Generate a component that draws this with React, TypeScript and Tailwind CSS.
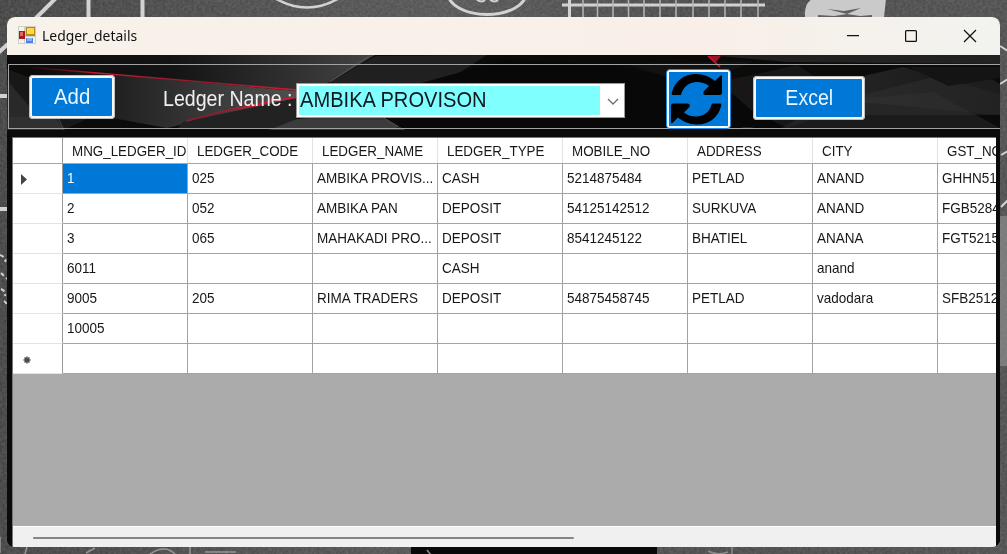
import type { ReactNode } from "react";

const columns = [
  "MNG_LEDGER_ID",
  "LEDGER_CODE",
  "LEDGER_NAME",
  "LEDGER_TYPE",
  "MOBILE_NO",
  "ADDRESS",
  "CITY",
  "GST_NO",
];

const rows: string[][] = [
  ["1", "025", "AMBIKA PROVIS...", "CASH", "5214875484", "PETLAD", "ANAND", "GHHN51"],
  ["2", "052", "AMBIKA PAN", "DEPOSIT", "54125142512", "SURKUVA", "ANAND", "FGB5284"],
  ["3", "065", "MAHAKADI PRO...", "DEPOSIT", "8541245122", "BHATIEL", "ANANA", "FGT5215"],
  ["6011", "", "", "CASH", "", "", "anand", ""],
  ["9005", "205", "RIMA TRADERS", "DEPOSIT", "54875458745", "PETLAD", "vadodara", "SFB2512"],
  ["10005", "", "", "", "", "", "", ""],
  ["", "", "", "", "", "", "", ""],
];

function Chalkboard() {
  return (
    <svg className="absolute inset-0" width="1007" height="554" fill="none" stroke="#d2d2d2" strokeWidth="4">
      <defs>
        <filter id="grain" x="0" y="0" width="100%" height="100%">
          <feTurbulence type="fractalNoise" baseFrequency="0.35" numOctaves="3" seed="4" />
          <feColorMatrix values="0 0 0 0 0.5  0 0 0 0 0.5  0 0 0 0 0.5  0.9 0 0 0 -0.25" />
        </filter>
        <linearGradient id="board">
          <stop offset="0" stopColor="#454545" />
          <stop offset="0.45" stopColor="#575757" />
          <stop offset="0.7" stopColor="#4c4c4c" />
          <stop offset="1" stopColor="#505050" />
        </linearGradient>
      </defs>
      <rect width="1007" height="554" fill="url(#board)" stroke="none" />
      <rect width="1007" height="554" filter="url(#grain)" opacity="0.35" stroke="none" />
      <path d="M56 -2L36 18M88.500 0v18M142.500 0v18M-2 53L8 44M0 96h8M0 209h8" />
      <path d="M273 -3Q307 18 341 -3" strokeWidth="2.500" />
      <ellipse cx="487" cy="-7" rx="39" ry="21.500" strokeWidth="3" />
      <path d="M477 0q5 3 8 0M490 0q5 3 8 0" strokeWidth="2" />
      <path d="M562 5H765M569.500 0V17" strokeWidth="3" />
      <path d="M583 0V17M597.500 0V17M613 0V17M628.500 0V17M644 0V17M660 0V17M676 0V17M693 0V17M709 0V17M725 0V17M741 0V17M758 0V17" strokeWidth="1.500" stroke="#b5b5b5" />
      <path d="M805 17Q804 4 812 -1H886L884 17Z" fill="#cacaca" stroke="none" />
      <path d="M827 9L844 11L861 8L847 14ZM818 15L834 16L847 14L860 16L872 15V17H818Z" fill="#606060" stroke="none" />
      <path d="M1000 46L1008 51M1000 84L1008 79M1001 155L1008 151M1001 207L1008 200" strokeWidth="2" />
      <path d="M1000 216h7v150h-7z" fill="#969696" stroke="none" opacity="0.6" />
      <path d="M0 255q7 3 5 7M1 273l6 6M1 289q5 2 4 7M4 301q4 3 3 6" strokeWidth="2" strokeDasharray="4 3" />
      <path d="M0 537v16M27 547L25 554M86 553l9-5M150 554q15-10 25 0M190 547v7M205 552h31" strokeWidth="1.500" stroke="#969696" />
      <rect x="411" y="545" width="246" height="9" fill="#070807" stroke="none" />
      <path d="M427 550l4 5M708 551q10 5 20 1M732 547v7" strokeWidth="1.500" stroke="#8c8c8c" />
    </svg>
  );
}

function FacetedBackdrop() {
  return (
    <svg className="absolute inset-0" width="993" height="492">
      <defs>
        <linearGradient id="facetLeft">
          <stop offset="0" stopColor="#090909" />
          <stop offset="1" stopColor="#505050" />
        </linearGradient>
        <linearGradient id="facetGrey">
          <stop offset="0" stopColor="#2b2b2b" />
          <stop offset="1" stopColor="#151515" />
        </linearGradient>
        <linearGradient id="facetTop">
          <stop offset="0" stopColor="#0c0c0c" />
          <stop offset="0.45" stopColor="#141414" />
          <stop offset="1" stopColor="#444" />
        </linearGradient>
        <linearGradient id="redRay" gradientUnits="userSpaceOnUse" x1="20" y1="0" x2="290" y2="0">
          <stop offset="0" stopColor="#7c0715" stopOpacity="0.1" />
          <stop offset="0.25" stopColor="#bd1c32" />
          <stop offset="0.65" stopColor="#8d1b2a" />
          <stop offset="1" stopColor="#d81730" />
        </linearGradient>
      </defs>
      <rect width="993" height="492" fill="#0b0b0a" />
      <path d="M0 0H368L323 27L290 36L40 12L0 5Z" fill="url(#facetTop)" />
      <path d="M20 12L290 36V43L160 73L62 55Z" fill="url(#facetLeft)" />
      <path d="M323 27L369 1L480 0L410 45Z" fill="#202020" />
      <path d="M0 14L103 53L57 75H0Z" fill="#181818" />
      <path d="M0 25L42 75H0Z" fill="#292929" />
      <path d="M48 62L57 75H0V62Z" fill="#303030" />
      <path d="M176 67L291 43L289 64L380 65L397 74H170Z" fill="#222" />
      <path d="M367 57L397 75H262L290 64Z" fill="#464646" opacity="0.7" />
      <path d="M407 30L498 5L604 10L710 32L790 74H390Z" fill="#080808" />
      <path d="M620 9L746 6L690 32Z" fill="#121212" />
      <path d="M700 0H993V9L781 7Z" fill="#222" />
      <path d="M712 27L790 10L850 49L780 73L744 55Z" fill="#171717" />
      <path d="M782 38L896 12L993 39V60L843 46Z" fill="url(#facetGrey)" />
      <path d="M855 40L965 12L993 29V60H821Z" fill="#333" opacity="0.45" />
      <path d="M821 47L926 37L993 73H774Z" fill="#343434" opacity="0.4" />
      <path d="M902 12L941 31L993 23V12Z" fill="#141414" />
      <path d="M20 12L290 35" fill="none" stroke="url(#redRay)" strokeWidth="1.600" />
      <path d="M180 66Q235 50 291 42" fill="none" stroke="url(#redRay)" strokeWidth="1.600" />
      <path d="M225 55L270 44L250 51Z" fill="#d9182f" />
      <path d="M701 1H714L709 7Z" fill="#981426" />
      <path d="M701 1L713 12" stroke="#dc1934" strokeWidth="1.500" />
      <path d="M713 12L745 37" stroke="#34070d" strokeWidth="1" />
      <path d="M730 74Q736 72 746 73" stroke="#701020" strokeWidth="1" fill="none" />
      <path d="M323 27L362 1M51 63L57 75M367 57L397 75" stroke="#626262" strokeWidth="0.700" />
    </svg>
  );
}

function AppIcon() {
  return (
    <svg className="ml-[11px] mt-[9px] shrink-0" width="18" height="18">
      <rect width="18" height="18" fill="#d0cec9" />
      <path d="M1 1h5v4H1zM7 11h10v6H7zM1 13h5v4H1z" fill="#f4f2ee" />
      <rect x="1" y="5" width="6" height="8" fill="#a91b1b" />
      <rect x="2" y="6" width="3" height="4" fill="#d56b61" />
      <rect x="8" y="1" width="9" height="9" fill="#bb8b11" />
      <rect x="9" y="2" width="7" height="6" fill="#ffd650" />
      <rect x="8" y="12" width="7" height="5" fill="#4e82d8" />
      <rect x="9" y="12" width="5" height="3" fill="#8ab2f4" />
    </svg>
  );
}

function TitleBar() {
  return (
    <header className="relative flex h-[38px] bg-linear-to-r from-[#f7f2eb] via-[#f9efe8] via-70% to-[#f2f3ef]">
      <AppIcon />
      <h1 className="ml-[6px] mt-[7px] origin-left scale-x-[0.928] whitespace-nowrap font-['Noto_Sans',sans-serif] text-[15px] leading-[22px] text-[#111]">Ledger_details</h1>
      <svg className="ml-auto mr-[23px] mt-[12px] shrink-0" width="131" height="14" fill="none" stroke="#111" strokeWidth="1.250">
        <path d="M1 6.500h12" />
        <rect x="59.600" y="1.600" width="10.800" height="10.800" rx="1" />
        <path d="M118 1l12 12M130 1l-12 12" />
      </svg>
    </header>
  );
}

function RefreshIcon() {
  const arrow = "M1 19C4 8 13 1 25 1C33 1 39 4 44 8L49 3Q51 1 51 4V20Q51 22 49 22H34Q31 21 33 18L38 13C34 10 30 9 26 9C18 9 12 14 10 22H2Q0 22 1 19Z";
  return (
    <svg width="55" height="53" viewBox="0 0 55 53" fill="#000">
      <path d={arrow} />
      <path d={arrow} transform="rotate(180 25.500 26.200)" />
    </svg>
  );
}

function ToolButton({ className, children }: { className: string; children: ReactNode }) {
  return (
    <button className={`relative flex shrink-0 items-center justify-center rounded-[4px] border-[3px] border-[#f7f7f7] bg-[#0078d7] leading-6 text-[#e9f6ff] outline outline-1 -outline-offset-1 outline-[#bdbdbd] ${className}`}>
      {children}
    </button>
  );
}

function Toolbar() {
  return (
    <section className="relative ml-[1px] mt-[9px] flex h-[65px] items-start border border-r-0 border-[#a3a3a3]">
      <ToolButton className="ml-[20px] mt-[10px] h-[44px] w-[86px]">
        <span className="-mt-[1px] text-[21.500px] scale-x-[0.95]">Add</span>
      </ToolButton>
      <label className="relative ml-[48px] mt-[20px] w-[133px] shrink-0 origin-left scale-x-[0.911] whitespace-nowrap text-[21.500px] leading-[29px] text-[#f0f0f0]">Ledger Name :</label>
      <div className="relative mt-[18px] flex h-[35px] w-[329px] shrink-0 border border-[#9b9b9b] bg-white p-[2px] pr-0">
        <div className="w-[301px] bg-[#80ffff] text-[22px] leading-[27px] text-[#101820]">
          <span className="ml-[1px] inline-block origin-left scale-x-[0.914] whitespace-nowrap">AMBIKA PROVISON</span>
        </div>
        <svg className="ml-[7px] mt-[12px]" width="12" height="8" fill="none" stroke="#6c6c6c" strokeWidth="1.300">
          <path d="M1 1l5 5 5-5" />
        </svg>
      </div>
      <button className="relative ml-[41px] mt-[4px] flex h-[60px] w-[65px] shrink-0 items-center justify-center rounded-[4px] border border-[#178be5] bg-[#f6fbff] p-[2px]">
        <span className="flex h-[54px] w-[59px] items-center justify-center bg-[#0078d7]"><RefreshIcon /></span>
      </button>
      <ToolButton className="ml-[22px] mt-[11px] h-[44px] w-[112px]">
        <span className="-mt-[1px] text-[21.500px] scale-x-[0.91]">Excel</span>
      </ToolButton>
    </section>
  );
}

function DataGrid() {
  return (
    <main className="relative ml-[5px] mt-[8px] flex h-[410px] w-[984px] flex-col overflow-hidden border-l border-t border-[#777] bg-[#ababab]">
      <div className="flex h-[26px] w-[1051px] shrink-0 border-b border-[#a6a6a6] bg-white text-[15px] text-[#171717]">
        <div className="w-[50px] shrink-0 border-r border-[#999]" />
        {columns.map((column) => (
          <div key={column} className="w-[125px] shrink-0 overflow-hidden border-r border-[#e2e2e2] pl-[9px]">
            <span className="inline-block origin-left scale-x-[0.892] whitespace-nowrap leading-[25px]">{column}</span>
          </div>
        ))}
      </div>
      {rows.map((row, rowIndex) => (
        <div key={rowIndex} className="flex h-[30px] w-[1051px] shrink-0 bg-white text-[15px] text-[#171717]">
          <div className="flex w-[50px] shrink-0 items-center border-b border-r border-b-[#e3e3e3] border-r-[#999]">
            {rowIndex === 0 && <svg className="ml-[7px] mt-[2px]" width="8" height="13"><path d="M1 1L7 6.500L1 12Z" fill="#454545" /></svg>}
            {rowIndex === 6 && <svg className="ml-[10px] mt-[3px]" width="8" height="8" stroke="#4b4b4b" strokeWidth="1.500"><path d="M4 .5v7M.5 4h7M1.500 1.500l5 5M6.500 1.500l-5 5" /></svg>}
          </div>
          {row.map((value, colIndex) => (
            <div
              key={colIndex}
              className={`w-[125px] shrink-0 overflow-hidden border-b border-r border-[#a3a3a3] pl-[4px] ${rowIndex === 0 && colIndex === 0 ? "bg-[#0078d7] text-white" : ""}`}
            >
              <span className="inline-block origin-left scale-x-[0.9] whitespace-nowrap leading-[28px]">{value}</span>
            </div>
          ))}
        </div>
      ))}
      <div className="mt-auto flex h-[21px] shrink-0 items-center border-t border-white bg-[#f0f0f0]">
        <div className="ml-[20px] mt-[2px] h-[2px] w-[541px] rounded-full bg-[#858585]" />
      </div>
    </main>
  );
}

export default function App() {
  return (
    <div className="relative h-[554px] w-[1007px] overflow-hidden bg-[#505050] font-['Liberation_Sans',sans-serif]">
      <Chalkboard />
      <div className="relative ml-[7px] mt-[17px] flex h-[530px] w-[993px] flex-col overflow-hidden rounded-[8px] bg-black">
        <TitleBar />
        <div className="relative flex h-[492px] flex-col">
          <FacetedBackdrop />
          <Toolbar />
          <DataGrid />
        </div>
      </div>
    </div>
  );
}
